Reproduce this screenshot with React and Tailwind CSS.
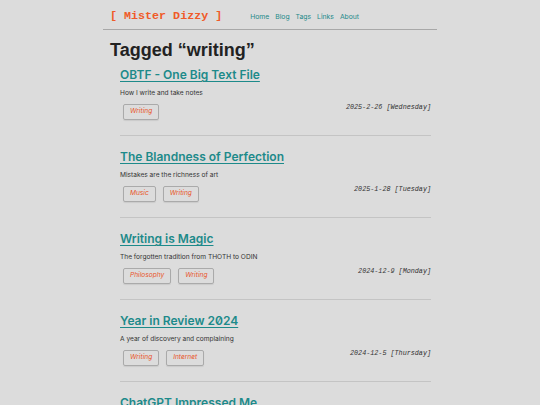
import { Fragment } from 'react'

const posts = [
  {
    title: 'OBTF - One Big Text File',
    desc: 'How I write and take notes',
    tags: ['Writing'],
    date: '2025-2-26 [Wednesday]',
  },
  {
    title: 'The Blandness of Perfection',
    desc: 'Mistakes are the richness of art',
    tags: ['Music', 'Writing'],
    date: '2025-1-28 [Tuesday]',
  },
  {
    title: 'Writing is Magic',
    desc: 'The forgotten tradition from THOTH to ODIN',
    tags: ['Philosophy', 'Writing'],
    date: '2024-12-9 [Monday]',
  },
  {
    title: 'Year in Review 2024',
    desc: 'A year of discovery and complaining',
    tags: ['Writing', 'Internet'],
    date: '2024-12-5 [Thursday]',
  },
  {
    title: 'ChatGPT Impressed Me',
    desc: 'Surprisingly useful',
    tags: ['Writing'],
    date: '2024-11-20 [Wednesday]',
  },
]

const nav = ['Home', 'Blog', 'Tags', 'Links', 'About']

export default function App() {
  return (
    <div className="h-[405px] overflow-hidden bg-[#dcdcdc] font-['Inter','Liberation_Sans',sans-serif] text-[#222]">
      <div className="mx-auto w-[334px]">
        {/* header */}
        <header className="flex items-end h-[30px] border-b border-[#a8a8a8] px-[7px] pb-[6px]">
          <a className="font-['Liberation_Mono',monospace] font-bold text-[11.7px] leading-[14px] text-[#f05a28] whitespace-pre">
            [ Mister Dizzy ]
          </a>
          <nav className="ml-[28px] flex gap-[6px] text-[6.8px] leading-[12px] text-[#1d8a8a]">
            {nav.map((n) => (
              <a key={n}>{n}</a>
            ))}
          </nav>
        </header>

        <h1 className="mt-[9px] px-[7px] font-['Liberation_Sans',sans-serif] text-[18px] leading-[22px] font-bold text-[#222]">
          Tagged “writing”
        </h1>

        <div className="mt-[6px] pl-[17px] pr-[6px]">
          {posts.map((p, i) => (
            <Fragment key={p.title}>
              <article className={`${i > 0 ? 'mt-[13px]' : ''} pb-[15px] border-b border-[#c4c4c4]`}>
                <h2 className="text-[12px] leading-[16px] font-semibold text-[#1d8a8a] underline underline-offset-[2px] decoration-[1px] [font-feature-settings:'zero']">
                  {p.title}
                </h2>
                <p className="mt-[5px] text-[6.6px] leading-[10px] text-[#333]">{p.desc}</p>
                <div className="mt-[6px] flex justify-between items-start">
                  <div className="flex gap-[7px] pl-[3px]">
                    {p.tags.map((t) => (
                      <span
                        key={t}
                        className="h-[16px] px-[6px] flex items-center border border-[#aaa] rounded-[2px] text-[6.6px] italic text-[#e8552a] shadow-[0_1px_1px_rgba(0,0,0,0.08)]"
                      >
                        {t}
                      </span>
                    ))}
                  </div>
                  <span className="mt-[-2px] font-['Liberation_Mono',monospace] italic text-[6.75px] leading-[10px] text-[#333] whitespace-pre">
                    {p.date}
                  </span>
                </div>
              </article>
            </Fragment>
          ))}
        </div>
      </div>
    </div>
  )
}
